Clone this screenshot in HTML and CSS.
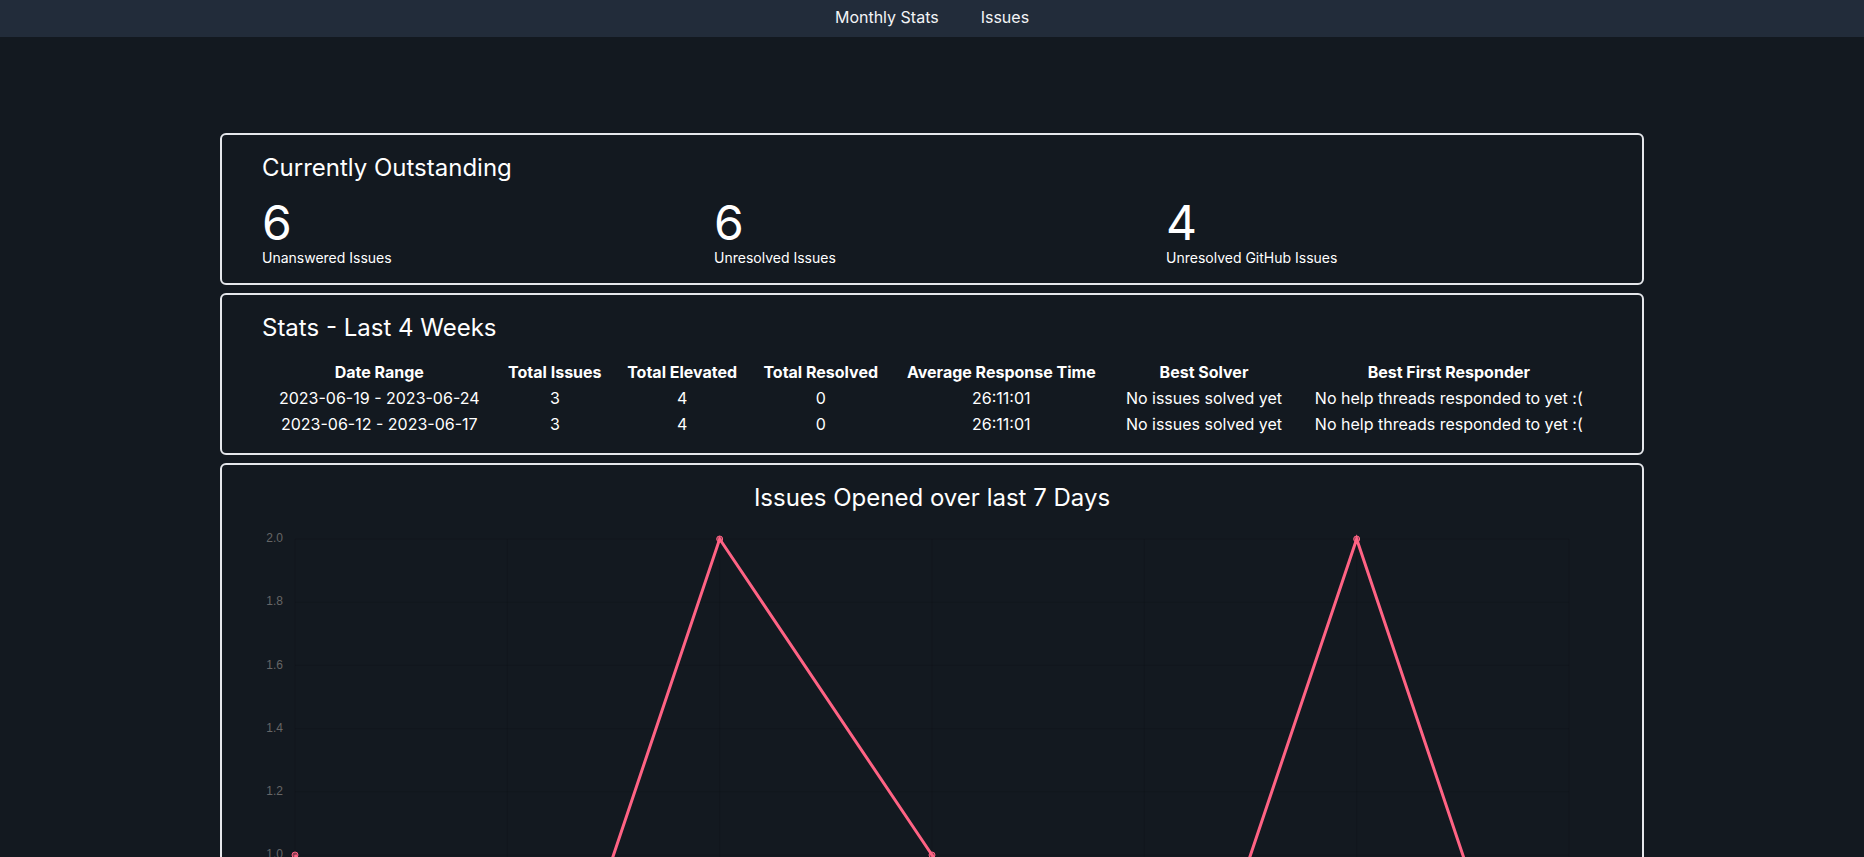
FILE: index.html
```html
<!DOCTYPE html>
<html lang="en">
<head>
<meta charset="utf-8">
<title>Stats</title>
<link rel="stylesheet" href="styles.css">
</head>
<body>
<nav class="topnav">
  <a class="nav-link" href="#">Monthly Stats</a>
  <a class="nav-link" href="#">Issues</a>
</nav>
<main class="main">
  <section class="card">
    <h2 class="card-title">Currently Outstanding</h2>
    <div class="stat-grid">
      <div class="stat">
        <div class="stat-num">6</div>
        <div class="stat-label">Unanswered Issues</div>
      </div>
      <div class="stat">
        <div class="stat-num">6</div>
        <div class="stat-label">Unresolved Issues</div>
      </div>
      <div class="stat">
        <div class="stat-num">4</div>
        <div class="stat-label">Unresolved GitHub Issues</div>
      </div>
    </div>
  </section>

  <section class="card">
    <h2 class="card-title">Stats - Last 4 Weeks</h2>
    <table class="stats-table">
      <thead>
        <tr>
          <th>Date Range</th>
          <th>Total Issues</th>
          <th>Total Elevated</th>
          <th>Total Resolved</th>
          <th>Average Response Time</th>
          <th>Best Solver</th>
          <th>Best First Responder</th>
        </tr>
      </thead>
      <tbody>
        <tr>
          <td>2023-06-19 - 2023-06-24</td>
          <td>3</td>
          <td>4</td>
          <td>0</td>
          <td>26:11:01</td>
          <td>No issues solved yet</td>
          <td>No help threads responded to yet :(</td>
        </tr>
        <tr>
          <td>2023-06-12 - 2023-06-17</td>
          <td>3</td>
          <td>4</td>
          <td>0</td>
          <td>26:11:01</td>
          <td>No issues solved yet</td>
          <td>No help threads responded to yet :(</td>
        </tr>
      </tbody>
    </table>
  </section>

  <section class="card chart-card">
    <h2 class="card-title centered">Issues Opened over last 7 Days</h2>
    <svg class="chart" width="1340" height="700" viewBox="0 0 1340 700" xmlns="http://www.w3.org/2000/svg">
      <g stroke="rgba(0,0,0,0.1)" stroke-width="1">
        <line x1="33" y1="657" x2="1307" y2="657"/>
        <line x1="33" y1="593.8" x2="1307" y2="593.8"/>
        <line x1="33" y1="530.6" x2="1307" y2="530.6"/>
        <line x1="33" y1="467.4" x2="1307" y2="467.4"/>
        <line x1="33" y1="404.2" x2="1307" y2="404.2"/>
        <line x1="33" y1="341" x2="1307" y2="341"/>
        <line x1="33" y1="277.8" x2="1307" y2="277.8"/>
        <line x1="33" y1="214.6" x2="1307" y2="214.6"/>
        <line x1="33" y1="151.4" x2="1307" y2="151.4"/>
        <line x1="33" y1="88.2" x2="1307" y2="88.2"/>
        <line x1="33" y1="25" x2="1307" y2="25"/>
        <line x1="33" y1="25" x2="33" y2="665"/>
        <line x1="245.33" y1="25" x2="245.33" y2="665"/>
        <line x1="457.67" y1="25" x2="457.67" y2="665"/>
        <line x1="670" y1="25" x2="670" y2="665"/>
        <line x1="882.33" y1="25" x2="882.33" y2="665"/>
        <line x1="1094.67" y1="25" x2="1094.67" y2="665"/>
        <line x1="1307" y1="25" x2="1307" y2="665"/>
      </g>
      <g class="tick" text-anchor="end" dominant-baseline="middle">
        <text x="21" y="25">2.0</text>
        <text x="21" y="88.2">1.8</text>
        <text x="21" y="151.4">1.6</text>
        <text x="21" y="214.6">1.4</text>
        <text x="21" y="277.8">1.2</text>
        <text x="21" y="341">1.0</text>
        <text x="21" y="404.2">0.8</text>
        <text x="21" y="467.4">0.6</text>
        <text x="21" y="530.6">0.4</text>
        <text x="21" y="593.8">0.2</text>
        <text x="21" y="657">0</text>
      </g>
      <g class="tick" text-anchor="middle">
        <text x="33" y="680">2023-06-18</text>
        <text x="245.33" y="680">2023-06-19</text>
        <text x="457.67" y="680">2023-06-20</text>
        <text x="670" y="680">2023-06-21</text>
        <text x="882.33" y="680">2023-06-22</text>
        <text x="1094.67" y="680">2023-06-23</text>
        <text x="1307" y="680">2023-06-24</text>
      </g>
      <polyline fill="none" stroke="rgb(255,99,132)" stroke-width="3" stroke-linejoin="miter" points="33,341 245.33,657 457.67,25 670,341 882.33,657 1094.67,25 1307,657"/>
      <g fill="rgba(255,99,132,0.5)" stroke="rgb(255,99,132)" stroke-width="1">
        <circle cx="33" cy="341" r="3"/>
        <circle cx="245.33" cy="657" r="3"/>
        <circle cx="457.67" cy="25" r="3"/>
        <circle cx="670" cy="341" r="3"/>
        <circle cx="882.33" cy="657" r="3"/>
        <circle cx="1094.67" cy="25" r="3"/>
        <circle cx="1307" cy="657" r="3"/>
      </g>
    </svg>
  </section>
</main>
</body>
</html>
```

FILE: styles.css
```css
* {
  box-sizing: border-box;
}

html, body {
  margin: 0;
  padding: 0;
}

body {
  background: #131920;
  color: #ffffff;
  font-family: Inter, "Noto Sans", "Liberation Sans", sans-serif;
  font-size: 16px;
  line-height: 24px;
}

.topnav {
  height: 37px;
  background: #222c3a;
  display: flex;
  justify-content: center;
  gap: 42px;
  padding-top: 5px;
}

.nav-link {
  color: #f3f4f6;
  text-decoration: none;
  font-size: 16px;
  line-height: 24px;
}

.main {
  width: 1424px;
  margin: 0 auto;
  padding-top: 96px;
}

.card {
  border: 2px solid #e5e7eb;
  border-radius: 6px;
  padding: 17px 40px 15px 40px;
  margin-bottom: 8px;
}

.card-title {
  margin: 0;
  font-size: 24px;
  line-height: 32px;
  font-weight: 400;
}

.card-title.centered {
  text-align: center;
}

.stat-grid {
  display: grid;
  grid-template-columns: repeat(3, 1fr);
  gap: 16px;
  margin-top: 15px;
}

.stat-num {
  font-size: 48px;
  line-height: 48px;
}

.stat-label {
  margin-top: 1px;
  font-size: 14px;
  line-height: 20px;
}

.stats-table {
  width: 100%;
  margin-top: 14px;
  border-spacing: 2px;
  text-align: center;
}

.stats-table th,
.stats-table td {
  padding: 0 8px;
  font-size: 16px;
  line-height: 24px;
}

.stats-table th {
  font-weight: 700;
}

.chart-card {
  padding-bottom: 40px;
}

.chart {
  display: block;
}

.tick {
  font-family: "Liberation Sans", Arial, sans-serif;
  font-size: 12px;
  fill: #666666;
}
```
